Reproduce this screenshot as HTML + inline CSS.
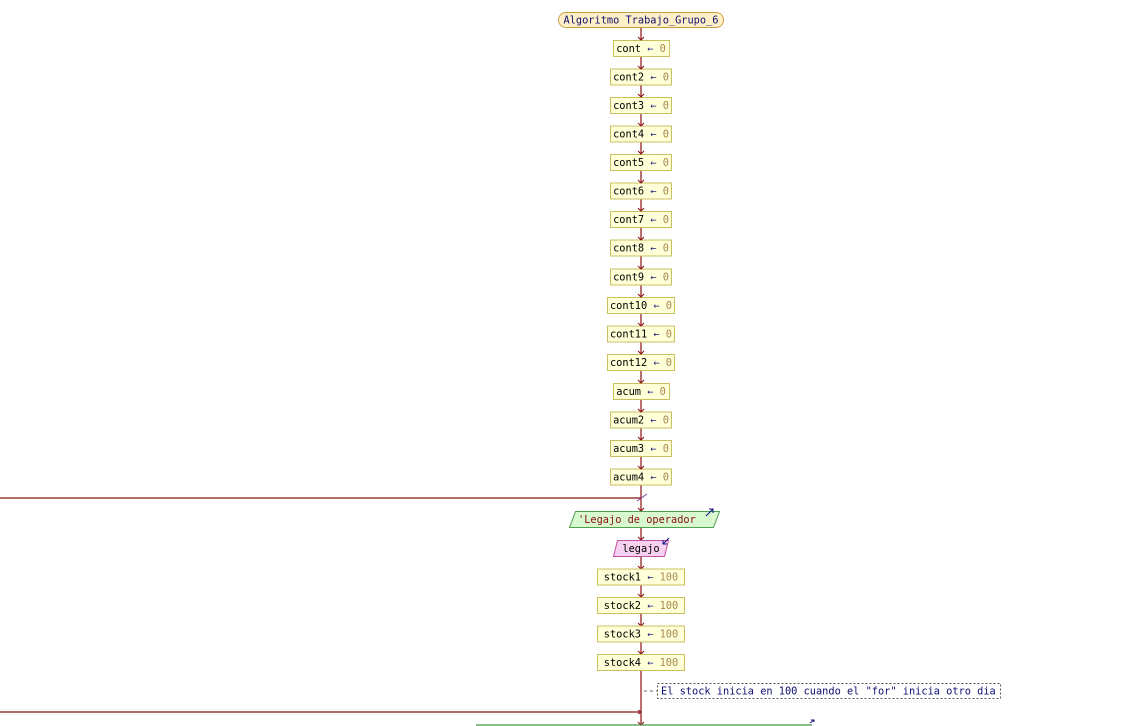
<!DOCTYPE html>
<html><head><meta charset="utf-8"><style>
html,body{margin:0;padding:0;background:#fff;width:1144px;height:726px;overflow:hidden}
svg{display:block}
text{font-family:"DejaVu Sans Mono","Liberation Mono",monospace;font-size:10.3px}
.b{fill:#ffffd8;stroke:#c8c060;stroke-width:1}
.v{fill:#000}
.n{fill:#a88850}
.a{fill:#1a1a80}
.l{stroke:#8b1010;stroke-width:1.2;fill:none}
</style></head><body>
<svg width="1144" height="726" xmlns="http://www.w3.org/2000/svg">
<!-- main vertical line -->
<line class="l" x1="641" y1="28" x2="641" y2="726"/>
<!-- terminal -->
<rect x="558.5" y="12.5" width="165" height="15" rx="7.5" fill="#fff0c8" stroke="#c8a040"/>
<text x="641" y="23.5" text-anchor="middle" fill="#101070">Algoritmo Trabajo_Grupo_6</text>

<g id="rows">
<rect class="b" x="613.5" y="40.5" width="56" height="16"/><text x="641" y="52" text-anchor="middle"><tspan class="v">cont </tspan><tspan class="a">←</tspan><tspan class="n"> 0</tspan></text>
<rect class="b" x="610.5" y="69" width="61" height="16"/><text x="641" y="80.5" text-anchor="middle"><tspan class="v">cont2 </tspan><tspan class="a">←</tspan><tspan class="n"> 0</tspan></text>
<rect class="b" x="610.5" y="97.5" width="61" height="16"/><text x="641" y="109" text-anchor="middle"><tspan class="v">cont3 </tspan><tspan class="a">←</tspan><tspan class="n"> 0</tspan></text>
<rect class="b" x="610.5" y="126" width="61" height="16"/><text x="641" y="137.5" text-anchor="middle"><tspan class="v">cont4 </tspan><tspan class="a">←</tspan><tspan class="n"> 0</tspan></text>
<rect class="b" x="610.5" y="154.5" width="61" height="16"/><text x="641" y="166" text-anchor="middle"><tspan class="v">cont5 </tspan><tspan class="a">←</tspan><tspan class="n"> 0</tspan></text>
<rect class="b" x="610.5" y="183" width="61" height="16"/><text x="641" y="194.5" text-anchor="middle"><tspan class="v">cont6 </tspan><tspan class="a">←</tspan><tspan class="n"> 0</tspan></text>
<rect class="b" x="610.5" y="211.5" width="61" height="16"/><text x="641" y="223" text-anchor="middle"><tspan class="v">cont7 </tspan><tspan class="a">←</tspan><tspan class="n"> 0</tspan></text>
<rect class="b" x="610.5" y="240" width="61" height="16"/><text x="641" y="251.5" text-anchor="middle"><tspan class="v">cont8 </tspan><tspan class="a">←</tspan><tspan class="n"> 0</tspan></text>
<rect class="b" x="610.5" y="269" width="61" height="16"/><text x="641" y="280.5" text-anchor="middle"><tspan class="v">cont9 </tspan><tspan class="a">←</tspan><tspan class="n"> 0</tspan></text>
<rect class="b" x="607.5" y="297.5" width="67" height="16"/><text x="641" y="309" text-anchor="middle"><tspan class="v">cont10 </tspan><tspan class="a">←</tspan><tspan class="n"> 0</tspan></text>
<rect class="b" x="607.5" y="326" width="67" height="16"/><text x="641" y="337.5" text-anchor="middle"><tspan class="v">cont11 </tspan><tspan class="a">←</tspan><tspan class="n"> 0</tspan></text>
<rect class="b" x="607.5" y="354.5" width="67" height="16"/><text x="641" y="366" text-anchor="middle"><tspan class="v">cont12 </tspan><tspan class="a">←</tspan><tspan class="n"> 0</tspan></text>
<rect class="b" x="613.5" y="383.5" width="56" height="16"/><text x="641" y="395" text-anchor="middle"><tspan class="v">acum </tspan><tspan class="a">←</tspan><tspan class="n"> 0</tspan></text>
<rect class="b" x="610.5" y="412" width="61" height="16"/><text x="641" y="423.5" text-anchor="middle"><tspan class="v">acum2 </tspan><tspan class="a">←</tspan><tspan class="n"> 0</tspan></text>
<rect class="b" x="610.5" y="440.5" width="61" height="16"/><text x="641" y="452" text-anchor="middle"><tspan class="v">acum3 </tspan><tspan class="a">←</tspan><tspan class="n"> 0</tspan></text>
<rect class="b" x="610.5" y="469" width="61" height="16"/><text x="641" y="480.5" text-anchor="middle"><tspan class="v">acum4 </tspan><tspan class="a">←</tspan><tspan class="n"> 0</tspan></text>
</g>

<!-- arrowheads -->
<g stroke="#8b1010" stroke-width="1" fill="none">
<path d="M638 37l3 3l3 -3M638 66l3 3l3 -3M638 94l3 3l3 -3M638 123l3 3l3 -3M638 151l3 3l3 -3M638 180l3 3l3 -3M638 208l3 3l3 -3M638 237l3 3l3 -3M638 266l3 3l3 -3M638 294l3 3l3 -3M638 323l3 3l3 -3M638 351l3 3l3 -3M638 380l3 3l3 -3M638 409l3 3l3 -3M638 437l3 3l3 -3M638 466l3 3l3 -3M638 508l3 3l3 -3M638 537l3 3l3 -3M638 566l3 3l3 -3M638 594l3 3l3 -3M638 623l3 3l3 -3M638 651l3 3l3 -3M638 722l3 3l3 -3M638 710l3 2l-3 2"/>
</g>

<!-- loop line -->
<line x1="0" y1="498" x2="641" y2="498" stroke="#8b1010" stroke-width="1.2"/>
<line x1="637" y1="501" x2="647" y2="494" stroke="#8040a0" stroke-width="1"/>

<!-- output parallelogram -->
<polygon points="575.5,511.5 719.5,511.5 713.5,527.5 569.5,527.5" fill="#d8f8d0" stroke="#50a050"/>
<text x="578" y="523" fill="#8b1010">'Legajo de operador</text>
<path d="M706 516l7 -7M709 509h4v4" stroke="#101080" fill="none"/>

<!-- input -->
<polygon points="617.5,540.5 668.5,540.5 664.5,556.5 613.5,556.5" fill="#f8d0f0" stroke="#c050a0"/>
<text x="641" y="552" text-anchor="middle" fill="#000">legajo</text>
<path d="M669 538l-6 6M663 540v4h4" stroke="#101080" fill="none"/>

<rect class="b" x="597.5" y="569" width="87" height="16"/><text x="641" y="580.5" text-anchor="middle"><tspan class="v">stock1 </tspan><tspan class="a">←</tspan><tspan class="n"> 100</tspan></text>
<rect class="b" x="597.5" y="597.5" width="87" height="16"/><text x="641" y="609" text-anchor="middle"><tspan class="v">stock2 </tspan><tspan class="a">←</tspan><tspan class="n"> 100</tspan></text>
<rect class="b" x="597.5" y="626" width="87" height="16"/><text x="641" y="637.5" text-anchor="middle"><tspan class="v">stock3 </tspan><tspan class="a">←</tspan><tspan class="n"> 100</tspan></text>
<rect class="b" x="597.5" y="654.5" width="87" height="16"/><text x="641" y="666" text-anchor="middle"><tspan class="v">stock4 </tspan><tspan class="a">←</tspan><tspan class="n"> 100</tspan></text>

<!-- comment -->
<line x1="644" y1="691" x2="657" y2="691" stroke="#666" stroke-dasharray="3,3"/>
<rect x="657.5" y="683.5" width="343" height="15" fill="#fff" stroke="#555" stroke-dasharray="2,2"/>
<text x="661" y="694.5" fill="#101070">El stock inicia en 100 cuando el "for" inicia otro dia</text>

<line x1="0" y1="712" x2="641" y2="712" stroke="#8b1010" stroke-width="1.2"/>
<line x1="476" y1="725" x2="812" y2="725" stroke="#60a860" stroke-width="1.5"/>
<path d="M810 723l4 -3M811 720h3v2" stroke="#101080" fill="none"/>
</svg>
</body></html>
